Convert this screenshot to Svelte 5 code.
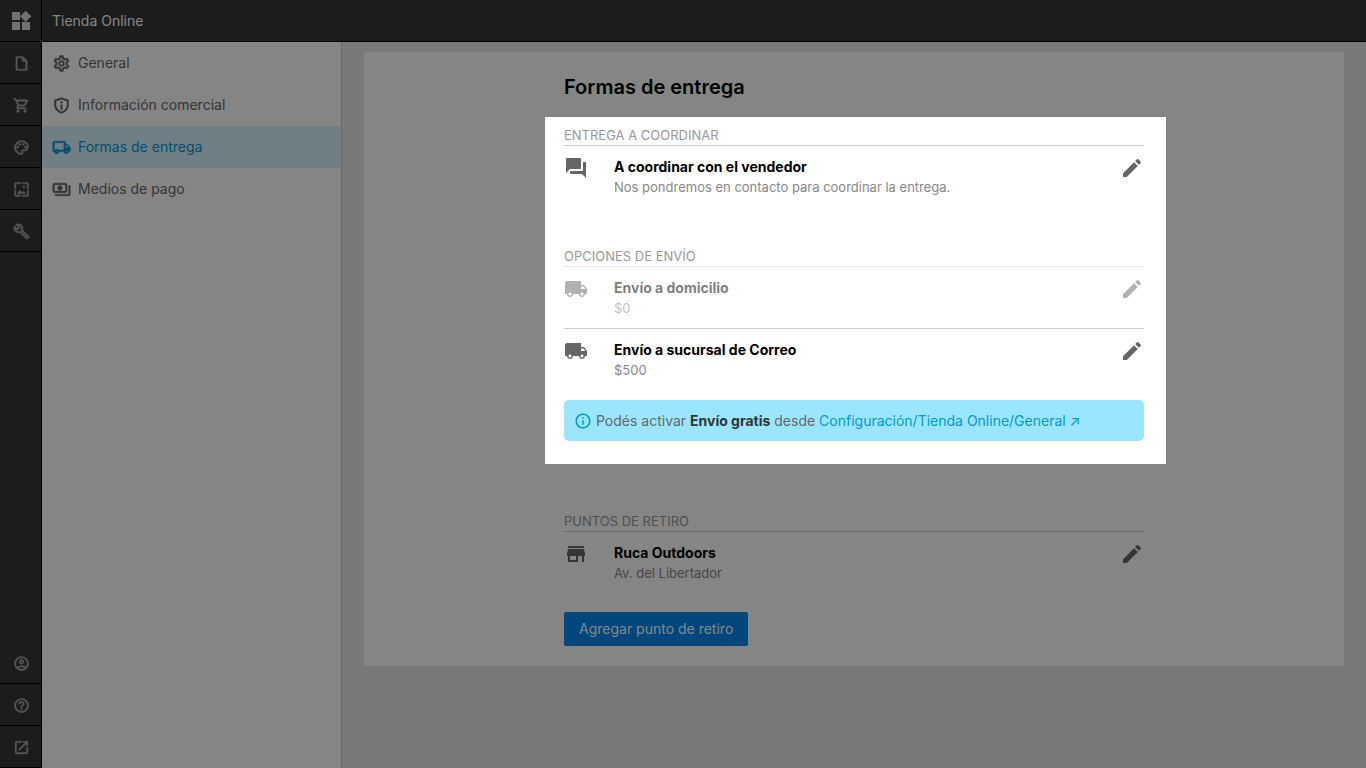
<script lang="ts">
	interface MenuItem {
		id: string;
		label: string;
		icon: string;
	}

	interface Method {
		title: string;
		detail: string;
		icon: string;
		disabled?: boolean;
	}

	const icons: Record<string, string> = {
		widgets:
			'M13 13v8h8v-8h-8zM3 21h8v-8H3v8zM3 3v8h8V3H3zm13.66-1.31L11 7.34 16.66 13l5.66-5.66-5.66-5.65z',
		file: 'M14 2H6c-1.1 0-2 .9-2 2v16c0 1.1.9 2 2 2h12c1.1 0 2-.9 2-2V8l-6-6zM6 20V4h7v5h5v11H6z',
		cart: 'M15.55 13c.75 0 1.41-.41 1.75-1.03l3.58-6.49A.996.996 0 0020.01 4H5.21l-.94-2H1v2h2l3.6 7.59-1.35 2.44C4.52 15.37 5.48 17 7 17h12v-2H7l1.1-2h7.45zM6.16 6h12.15l-2.76 5H8.53L6.16 6zM7 18c-1.1 0-1.99.9-1.99 2S5.9 22 7 22s2-.9 2-2-.9-2-2-2zm10 0c-1.1 0-1.99.9-1.99 2s.89 2 1.99 2 2-.9 2-2-.9-2-2-2z',
		palette:
			'M12 22C6.49 22 2 17.51 2 12S6.49 2 12 2s10 4.04 10 9c0 3.31-2.69 6-6 6h-1.77c-.28 0-.5.22-.5.5 0 .12.05.23.13.33.41.47.64 1.06.64 1.67A2.5 2.5 0 0112 22zm0-18c-4.41 0-8 3.59-8 8s3.59 8 8 8c.28 0 .5-.22.5-.5a.54.54 0 00-.14-.35c-.41-.46-.63-1.05-.63-1.65a2.5 2.5 0 012.5-2.5H16c2.21 0 4-1.79 4-4 0-3.86-3.59-7-8-7zM5 11.5a1.5 1.5 0 103 0 1.5 1.5 0 10-3 0zM8 7.5a1.5 1.5 0 103 0 1.5 1.5 0 10-3 0zM13 7.5a1.5 1.5 0 103 0 1.5 1.5 0 10-3 0zM16 11.5a1.5 1.5 0 103 0 1.5 1.5 0 10-3 0z',
		image:
			'M4 4h7V2H4c-1.1 0-2 .9-2 2v7h2V4zm6 9l-4 5h12l-3-4-2.03 2.71L10 13zm7-4.5c0-.83-.67-1.5-1.5-1.5S14 7.67 14 8.5s.67 1.5 1.5 1.5S17 9.33 17 8.5zM20 2h-7v2h7v7h2V4c0-1.1-.9-2-2-2zm0 18h-7v2h7c1.1 0 2-.9 2-2v-7h-2v7zM4 13H2v7c0 1.1.9 2 2 2h7v-2H4v-7z',
		wrench:
			'M22.61 18.99l-9.08-9.08c.93-2.34.45-5.1-1.44-7C9.79.61 6.21.4 3.66 2.26L7.5 6.11 6.08 7.52 2.25 3.69C.39 6.23.6 9.82 2.9 12.11c1.86 1.86 4.57 2.35 6.89 1.48l9.11 9.11c.39.39 1.02.39 1.41 0l2.3-2.3c.4-.38.4-1.01 0-1.41zm-3 1.6l-9.46-9.46c-.61.45-1.29.72-2 .82-1.36.2-2.79-.21-3.83-1.25C3.37 9.76 2.93 8.5 3 7.26l3.09 3.09 4.24-4.24-3.09-3.09c1.24-.07 2.49.37 3.44 1.31 1.08 1.08 1.49 2.57 1.24 3.96-.12.71-.42 1.37-.88 1.96l9.45 9.45-.88.89z',
		account:
			'M12 2C6.48 2 2 6.48 2 12s4.48 10 10 10 10-4.48 10-10S17.52 2 12 2zM7.35 18.5C8.66 17.56 10.26 17 12 17s3.34.56 4.65 1.5C15.34 19.44 13.74 20 12 20s-3.34-.56-4.65-1.5zm10.79-1.38C16.45 15.8 14.32 15 12 15s-4.45.8-6.14 2.12C4.7 15.73 4 13.95 4 12c0-4.42 3.58-8 8-8s8 3.58 8 8c0 1.95-.7 3.73-1.86 5.12zM12 6c-1.93 0-3.5 1.57-3.5 3.5S10.07 13 12 13s3.5-1.57 3.5-3.5S13.93 6 12 6zm0 5c-.83 0-1.5-.67-1.5-1.5S11.17 8 12 8s1.5.67 1.5 1.5S12.83 11 12 11z',
		help: 'M11 18h2v-2h-2v2zm1-16C6.48 2 2 6.48 2 12s4.48 10 10 10 10-4.48 10-10S17.52 2 12 2zm0 18c-4.41 0-8-3.59-8-8s3.59-8 8-8 8 3.59 8 8-3.59 8-8 8zm0-14c-2.21 0-4 1.79-4 4h2c0-1.1.9-2 2-2s2 .9 2 2c0 2-3 1.75-3 5h2c0-2.25 3-2.5 3-5 0-2.21-1.79-4-4-4z',
		open: 'M19 19H5V5h7V3H5a2 2 0 00-2 2v14a2 2 0 002 2h14c1.1 0 2-.9 2-2v-7h-2v7zM14 3v2h3.59l-9.83 9.83 1.41 1.41L19 6.41V10h2V3h-7z',
		gear: 'M19.43 12.98c.04-.32.07-.64.07-.98 0-.34-.03-.66-.07-.98l2.11-1.65c.19-.15.24-.42.12-.64l-2-3.46a.5.5 0 00-.61-.22l-2.49 1c-.52-.4-1.08-.73-1.69-.98l-.38-2.65A.488.488 0 0014 2h-4c-.25 0-.46.18-.49.42l-.38 2.65c-.61.25-1.17.59-1.69.98l-2.49-1a.566.566 0 00-.18-.03c-.17 0-.34.09-.43.25l-2 3.46c-.13.22-.07.49.12.64l2.11 1.65c-.04.32-.07.65-.07.98 0 .33.03.66.07.98l-2.11 1.65c-.19.15-.24.42-.12.64l2 3.46a.5.5 0 00.61.22l2.49-1c.52.4 1.08.73 1.69.98l.38 2.65c.03.24.24.42.49.42h4c.25 0 .46-.18.49-.42l.38-2.65c.61-.25 1.17-.59 1.69-.98l2.49 1c.06.02.12.03.18.03.17 0 .34-.09.43-.25l2-3.46c.12-.22.07-.49-.12-.64l-2.11-1.65zm-1.98-1.71c.04.31.05.52.05.73 0 .21-.02.43-.05.73l-.14 1.13.89.7 1.08.84-.7 1.21-1.27-.51-1.04-.42-.9.68c-.43.32-.84.56-1.25.73l-1.06.43-.16 1.13-.2 1.35h-1.4l-.19-1.35-.16-1.13-1.06-.43c-.43-.18-.83-.41-1.23-.71l-.91-.7-1.06.43-1.27.51-.7-1.21 1.08-.84.89-.7-.14-1.13c-.03-.31-.05-.54-.05-.74s.02-.43.05-.73l.14-1.13-.89-.7-1.08-.84.7-1.21 1.27.51 1.04.42.9-.68c.43-.32.84-.56 1.25-.73l1.06-.43.16-1.13.2-1.35h1.39l.19 1.35.16 1.13 1.06.43c.43.18.83.41 1.23.71l.91.7 1.06-.43 1.27-.51.7 1.21-1.07.85-.89.7.14 1.13zM12 8.3a3.7 3.7 0 100 7.4 3.7 3.7 0 000-7.4zm0 5.5a1.8 1.8 0 110-3.6 1.8 1.8 0 010 3.6z',
		shield:
			'M12 2L3 5.2v6c0 5.1 3.8 9.6 9 10.8 5.2-1.2 9-5.7 9-10.8v-6L12 2zm7 9.2c0 3.9-2.8 7.4-7 8.7-4.2-1.3-7-4.8-7-8.7V6.6l7-2.5 7 2.5v4.6zM11 7h2v2h-2zM11 11h2v6h-2z',
		truckOutline:
			'M20 8h-3V4H3c-1.1 0-2 .9-2 2v11h2c0 1.66 1.34 3 3 3s3-1.34 3-3h6c0 1.66 1.34 3 3 3s3-1.34 3-3h2v-5l-3-4zm-.5 1.5l1.96 2.5H17V9.5h2.5zM6 18c-.55 0-1-.45-1-1s.45-1 1-1 1 .45 1 1-.45 1-1 1zm2.22-3c-.55-.61-1.33-1-2.22-1s-1.67.39-2.22 1H3V6h12v9H8.22zM18 18c-.55 0-1-.45-1-1s.45-1 1-1 1 .45 1 1-.45 1-1 1z',
		payments:
			'M19 14V6c0-1.1-.9-2-2-2H3c-1.1 0-2 .9-2 2v8c0 1.1.9 2 2 2h14c1.1 0 2-.9 2-2zm-2 0H3V6h14v8zm-7-7c-1.66 0-3 1.34-3 3s1.34 3 3 3 3-1.34 3-3-1.34-3-3-3zm13 0v11c0 1.1-.9 2-2 2H4v-2h17V7h2z',
		chat: 'M21 6h-2v9H6v2c0 .55.45 1 1 1h11l4 4V7c0-.55-.45-1-1-1zm-4 6V3c0-.55-.45-1-1-1H3c-.55 0-1 .45-1 1v14l4-4h10c.55 0 1-.45 1-1z',
		truck:
			'M20 8h-3V4H3c-1.1 0-2 .9-2 2v11h2c0 1.66 1.34 3 3 3s3-1.34 3-3h6c0 1.66 1.34 3 3 3s3-1.34 3-3h2v-5l-3-4zM6 18.5c-.83 0-1.5-.67-1.5-1.5s.67-1.5 1.5-1.5 1.5.67 1.5 1.5-.67 1.5-1.5 1.5zm13.5-9l1.96 2.5H17V9.5h2.5zm-1.5 9c-.83 0-1.5-.67-1.5-1.5s.67-1.5 1.5-1.5 1.5.67 1.5 1.5-.67 1.5-1.5 1.5z',
		store: 'M20 4H4v2h16V4zm1 10v-2l-1-5H4l-1 5v2h1v6h10v-6h4v6h2v-6h1zm-9 4H6v-4h6v4z',
		edit: 'M3 17.25V21h3.75L17.81 9.94l-3.75-3.75L3 17.25zM20.71 7.04c.39-.39.39-1.02 0-1.41l-2.34-2.34a.996.996 0 00-1.41 0l-1.83 1.83 3.75 3.75 1.83-1.83z',
		info: 'M11 7h2v2h-2V7zm0 4h2v6h-2v-6zm1-9C6.48 2 2 6.48 2 12s4.48 10 10 10 10-4.48 10-10S17.52 2 12 2zm0 18c-4.41 0-8-3.59-8-8s3.59-8 8-8 8 3.59 8 8-3.59 8-8 8z'
	};

	const railTop: MenuItem[] = [
		{ id: 'comprobantes', label: 'Comprobantes', icon: 'file' },
		{ id: 'ventas', label: 'Ventas', icon: 'cart' },
		{ id: 'apariencia', label: 'Apariencia', icon: 'palette' },
		{ id: 'imagenes', label: 'Imágenes', icon: 'image' },
		{ id: 'configuracion', label: 'Configuración', icon: 'wrench' }
	];

	const railBottom: MenuItem[] = [
		{ id: 'cuenta', label: 'Cuenta', icon: 'account' },
		{ id: 'ayuda', label: 'Ayuda', icon: 'help' },
		{ id: 'ver', label: 'Ver tienda', icon: 'open' }
	];

	const menu: MenuItem[] = [
		{ id: 'general', label: 'General', icon: 'gear' },
		{ id: 'info', label: 'Información comercial', icon: 'shield' },
		{ id: 'entrega', label: 'Formas de entrega', icon: 'truckOutline' },
		{ id: 'pago', label: 'Medios de pago', icon: 'payments' }
	];

	const arranged: Method[] = [
		{
			title: 'A coordinar con el vendedor',
			detail: 'Nos pondremos en contacto para coordinar la entrega.',
			icon: 'chat'
		}
	];

	const shipping: Method[] = [
		{ title: 'Envío a domicilio', detail: '$0', icon: 'truck', disabled: true },
		{ title: 'Envío a sucursal de Correo', detail: '$500', icon: 'truck' }
	];

	const pickup: Method[] = [{ title: 'Ruca Outdoors', detail: 'Av. del Libertador', icon: 'store' }];

	let current = $state('entrega');
</script>

{#snippet icon(name: string)}
	<svg class="icon" viewBox="0 0 24 24" aria-hidden="true"><path d={icons[name]} /></svg>
{/snippet}

{#snippet railButton(item: MenuItem)}
	<button class="rail-button" type="button" aria-label={item.label}>{@render icon(item.icon)}</button>
{/snippet}

{#snippet methodList(heading: string, methods: Method[])}
	<h2 class="group-title">{heading}</h2>
	<ul class="methods">
		{#each methods as method}
			<li class="method" class:disabled={method.disabled}>
				{@render icon(method.icon)}
				<div class="method-text">
					<h3>{method.title}</h3>
					<p>{method.detail}</p>
				</div>
				<button class="edit" type="button" aria-label="Editar {method.title}">
					{@render icon('edit')}
				</button>
			</li>
		{/each}
	</ul>
{/snippet}

<div class="app">
	<nav class="rail" aria-label="Principal">
		<button class="rail-button logo" type="button" aria-label="Inicio">{@render icon('widgets')}</button>
		{#each railTop as item}
			{@render railButton(item)}
		{/each}
		<div class="spacer"></div>
		{#each railBottom as item}
			{@render railButton(item)}
		{/each}
	</nav>

	<div class="main">
		<header class="topbar">Tienda Online</header>
		<div class="body">
			<nav class="sidebar" aria-label="Tienda Online">
				{#each menu as item}
					<a
						class="menu-item"
						class:active={current === item.id}
						href="#{item.id}"
						onclick={() => (current = item.id)}
					>
						{@render icon(item.icon)}
						{item.label}
					</a>
				{/each}
			</nav>

			<main class="content">
				<div class="panel">
					<div class="column">
						<h1>Formas de entrega</h1>

						<div class="spotlight">
							<section>{@render methodList('ENTREGA A COORDINAR', arranged)}</section>
							<section>
								{@render methodList('OPCIONES DE ENVÍO', shipping)}
								<div class="notice">
									{@render icon('info')}
									<p>
										Podés activar <strong>Envío gratis</strong> desde
										<a href="#general">Configuración/Tienda Online/General ↗</a>
									</p>
								</div>
							</section>
						</div>

						<section class="pickup">
							{@render methodList('PUNTOS DE RETIRO', pickup)}
							<button class="primary" type="button">Agregar punto de retiro</button>
						</section>
					</div>
				</div>
			</main>
		</div>
	</div>
</div>

<style>
	:global(body) {
		margin: 0;
	}

	.app {
		display: flex;
		min-height: 100vh;
		overflow: hidden;
		background: #e9e9e9;
		color: #000;
		font-family: Inter, 'Liberation Sans', sans-serif;
		font-size: 14px;
		line-height: 20px;
	}

	.app *,
	.app {
		box-sizing: border-box;
	}

	h1,
	h2,
	h3,
	p,
	ul {
		margin: 0;
		padding: 0;
	}

	button {
		border: 0;
		padding: 0;
		background: none;
		font: inherit;
		cursor: pointer;
	}

	.icon {
		display: block;
		flex: none;
		width: 24px;
		height: 24px;
		fill: currentColor;
	}

	/* Left rail */
	.rail {
		display: flex;
		flex: none;
		flex-direction: column;
		width: 42px;
		border-right: 1px solid #000;
		background: #363636;
	}

	.rail-button {
		display: flex;
		align-items: center;
		justify-content: center;
		height: 42px;
		padding: 2px 0 0 2px;
		border-bottom: 1px solid #000;
		color: #a8a8a8;
	}

	.rail-button .icon {
		width: 17px;
		height: 17px;
		stroke: currentColor;
		stroke-width: 0.6;
	}

	.rail-button.logo {
		padding: 1px 0 0 1px;
		color: #d8d8d8;
	}

	.rail-button.logo .icon {
		width: 24px;
		height: 24px;
		stroke: none;
	}

	.spacer {
		flex: 1;
	}

	.main {
		display: flex;
		flex: 1;
		flex-direction: column;
		min-width: 0;
	}

	.topbar {
		padding: 11px 10px 10px;
		border-bottom: 1px solid #000;
		background: #363636;
		color: #fff;
	}

	.body {
		display: flex;
		flex: 1;
	}

	/* Section menu */
	.sidebar {
		flex: none;
		width: 300px;
		border-right: 1px solid #ccc;
		background: #fff;
	}

	.menu-item {
		display: flex;
		align-items: center;
		gap: 7px;
		height: 42px;
		padding: 0 10px;
		color: #666;
		text-decoration: none;
	}

	.menu-item .icon {
		width: 19px;
		height: 19px;
		stroke: currentColor;
		stroke-width: 0.6;
	}

	.menu-item.active {
		background: #d7f3fb;
		color: #0098d8;
	}

	.content {
		flex: 1;
		padding: 10px 22px;
	}

	.panel {
		padding: 22px 20px 20px;
		background: #fff;
	}

	.column {
		max-width: 580px;
		margin: 0 auto;
	}

	h1 {
		margin-bottom: 17px;
		font-size: 20px;
		font-weight: 600;
		line-height: 26px;
	}

	/* The shadow dims everything around the highlighted sections */
	.spotlight {
		position: relative;
		z-index: 10;
		display: grid;
		gap: 41px;
		margin: 0 -22px 0 -19px;
		padding: 10px 22px 23px 19px;
		background: #fff;
		box-shadow: 0 0 0 9999px rgba(0, 0, 0, 0.48);
	}

	.pickup {
		margin-top: 49px;
	}

	.group-title {
		padding-bottom: 2px;
		color: #999;
		font-size: 13px;
		font-weight: 400;
		line-height: 16px;
	}

	.methods {
		list-style: none;
	}

	.method {
		display: flex;
		gap: 26px;
		padding: 10px 0;
		border-top: 1px solid #ccc;
		color: #666;
	}

	.method.disabled {
		opacity: 0.5;
	}

	.method-text {
		flex: 1;
		padding-top: 1px;
	}

	.method h3 {
		color: #000;
		font-size: 14px;
		font-weight: 700;
		line-height: 20px;
	}

	.method p {
		color: #888;
		font-size: 13px;
	}

	.edit {
		align-self: flex-start;
		color: #666;
	}

	.notice {
		display: flex;
		align-items: center;
		gap: 4px;
		margin-top: 10px;
		padding: 11px 10px 10px;
		border-radius: 5px;
		background: #9ae6ff;
		color: #666;
	}

	.notice .icon {
		width: 18px;
		height: 18px;
		color: #0098d8;
	}

	.notice strong {
		color: #333;
		font-weight: 700;
	}

	.notice a {
		color: #0098d8;
		text-decoration: none;
	}

	.primary {
		height: 34px;
		margin-top: 19px;
		padding: 0 15px;
		border-radius: 2px;
		background: #0088f0;
		color: #fff;
	}
</style>
